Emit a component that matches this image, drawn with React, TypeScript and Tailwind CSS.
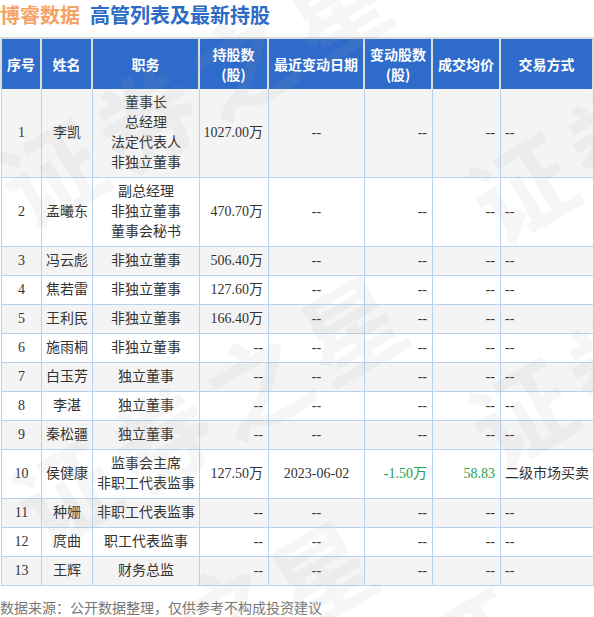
import React from "react";

type Row = {
  n: string;
  name: string;
  pos: string[];
  hold: string;
  date?: string;
  chg?: string;
  price?: string;
  way?: string;
  green?: boolean;
};

const rows: Row[] = [
  { n: "1", name: "李凯", pos: ["董事长", "总经理", "法定代表人", "非独立董事"], hold: "1027.00万" },
  { n: "2", name: "孟曦东", pos: ["副总经理", "非独立董事", "董事会秘书"], hold: "470.70万" },
  { n: "3", name: "冯云彪", pos: ["非独立董事"], hold: "506.40万" },
  { n: "4", name: "焦若雷", pos: ["非独立董事"], hold: "127.60万" },
  { n: "5", name: "王利民", pos: ["非独立董事"], hold: "166.40万" },
  { n: "6", name: "施雨桐", pos: ["非独立董事"], hold: "--" },
  { n: "7", name: "白玉芳", pos: ["独立董事"], hold: "--" },
  { n: "8", name: "李湛", pos: ["独立董事"], hold: "--" },
  { n: "9", name: "秦松疆", pos: ["独立董事"], hold: "--" },
  {
    n: "10",
    name: "侯健康",
    pos: ["监事会主席", "非职工代表监事"],
    hold: "127.50万",
    date: "2023-06-02",
    chg: "-1.50万",
    price: "58.83",
    way: "二级市场买卖",
    green: true,
  },
  { n: "11", name: "种姗", pos: ["非职工代表监事"], hold: "--" },
  { n: "12", name: "庹曲", pos: ["职工代表监事"], hold: "--" },
  { n: "13", name: "王辉", pos: ["财务总监"], hold: "--" },
];

const wm: { c: string; x: number; y: number }[] = [
  { c: "证", x: 50, y: 170 },
  { c: "券", x: 145, y: 115 },
  { c: "之", x: 240, y: 60 },
  { c: "星", x: 335, y: 5 },
  { c: "证", x: 520, y: 185 },
  { c: "券", x: 615, y: 130 },
  { c: "证", x: 64, y: 490 },
  { c: "券", x: 160, y: 435 },
  { c: "之", x: 255, y: 380 },
  { c: "星", x: 350, y: 325 },
  { c: "证", x: 520, y: 410 },
  { c: "券", x: 615, y: 355 },
  { c: "之", x: 225, y: 610 },
  { c: "星", x: 320, y: 570 },
  { c: "证", x: 470, y: 640 },
];

export default function App() {
  return (
    <div
      className="relative w-[594px] h-[617px] overflow-hidden bg-white"
      style={{ fontFamily: '"Liberation Serif", "Noto Sans CJK SC", serif' }}
    >
      <div
        className="h-[30px] flex items-center text-[20px] font-bold leading-[30px]"
        style={{ fontFamily: '"Noto Sans CJK SC", sans-serif' }}
      >
        <span className="text-[#f7a265]">博睿数据</span>
        <span className="ml-[10px] text-[#2c6bc6]">高管列表及最新持股</span>
      </div>

      <div className="mt-[7px]">
        <div
          className="flex gap-[2px] bg-[#dcdcdc] pt-[2px] px-[2px] text-white text-[14px] font-bold leading-[20px]"
          style={{ fontFamily: '"Noto Sans CJK SC", sans-serif' }}
        >
          <div className="w-[38px] h-[50px] bg-[#2e6bcb] flex items-center justify-center">序号</div>
          <div className="w-[49px] h-[50px] bg-[#2e6bcb] flex items-center justify-center">姓名</div>
          <div className="w-[105px] h-[50px] bg-[#2e6bcb] flex items-center justify-center">职务</div>
          <div className="w-[67px] h-[50px] bg-[#2e6bcb] flex flex-col items-center justify-center">
            <span>持股数</span>
            <span>(股)</span>
          </div>
          <div className="w-[94px] h-[50px] bg-[#2e6bcb] flex items-center justify-center">最近变动日期</div>
          <div className="w-[66px] h-[50px] bg-[#2e6bcb] flex flex-col items-center justify-center">
            <span>变动股数</span>
            <span>(股)</span>
          </div>
          <div className="w-[66px] h-[50px] bg-[#2e6bcb] flex items-center justify-center">成交均价</div>
          <div className="w-[91px] h-[50px] bg-[#2e6bcb] flex items-center justify-center">交易方式</div>
        </div>

        <div className="pl-[1px] text-[14px] leading-[20px] text-[#333]">
          {rows.map((r, i) => (
            <div
              key={r.n}
              className={`flex border-l border-b border-[#b7d2ec] ${i % 2 === 0 ? "bg-[#f4f4f4]" : "bg-white"}`}
            >
              <div className="w-[40px] py-[4px] border-r border-[#b7d2ec] flex items-center justify-center">{r.n}</div>
              <div className="w-[51px] py-[4px] border-r border-[#b7d2ec] flex items-center justify-center">{r.name}</div>
              <div className="w-[107px] py-[4px] border-r border-[#b7d2ec] flex flex-col items-center justify-center">
                {r.pos.map((p) => (
                  <span key={p}>{p}</span>
                ))}
              </div>
              <div className="w-[69px] py-[4px] pr-[5px] border-r border-[#b7d2ec] flex items-center justify-end">{r.hold}</div>
              <div className="w-[96px] py-[4px] border-r border-[#b7d2ec] flex items-center justify-center">{r.date ?? "--"}</div>
              <div
                className={`w-[68px] py-[4px] pr-[5px] border-r border-[#b7d2ec] flex items-center justify-end ${r.green ? "text-[#23a14a]" : ""}`}
              >
                {r.chg ?? "--"}
              </div>
              <div
                className={`w-[68px] py-[4px] pr-[5px] border-r border-[#b7d2ec] flex items-center justify-end ${r.green ? "text-[#23a14a]" : ""}`}
              >
                {r.price ?? "--"}
              </div>
              <div className="w-[93px] py-[4px] pl-[4px] border-r border-[#b7d2ec] flex items-center justify-start whitespace-nowrap">{r.way ?? "--"}</div>
            </div>
          ))}
        </div>
      </div>

      <div
        className="mt-[10px] text-[14px] leading-[22px] text-[#777]"
        style={{ fontFamily: '"Noto Sans CJK SC", sans-serif' }}
      >
        数据来源：公开数据整理，仅供参考不构成投资建议
      </div>

      <div className="pointer-events-none absolute inset-0" style={{ fontFamily: '"Noto Sans CJK SC", sans-serif' }}>
        {wm.map((w, i) => (
          <span
            key={i}
            className="absolute w-[110px] h-[110px] -ml-[55px] -mt-[55px] flex items-center justify-center text-[100px] leading-none font-bold text-[rgba(170,170,170,0.1)] -rotate-30"
            style={{ left: w.x, top: w.y }}
          >
            {w.c}
          </span>
        ))}
      </div>
    </div>
  );
}
